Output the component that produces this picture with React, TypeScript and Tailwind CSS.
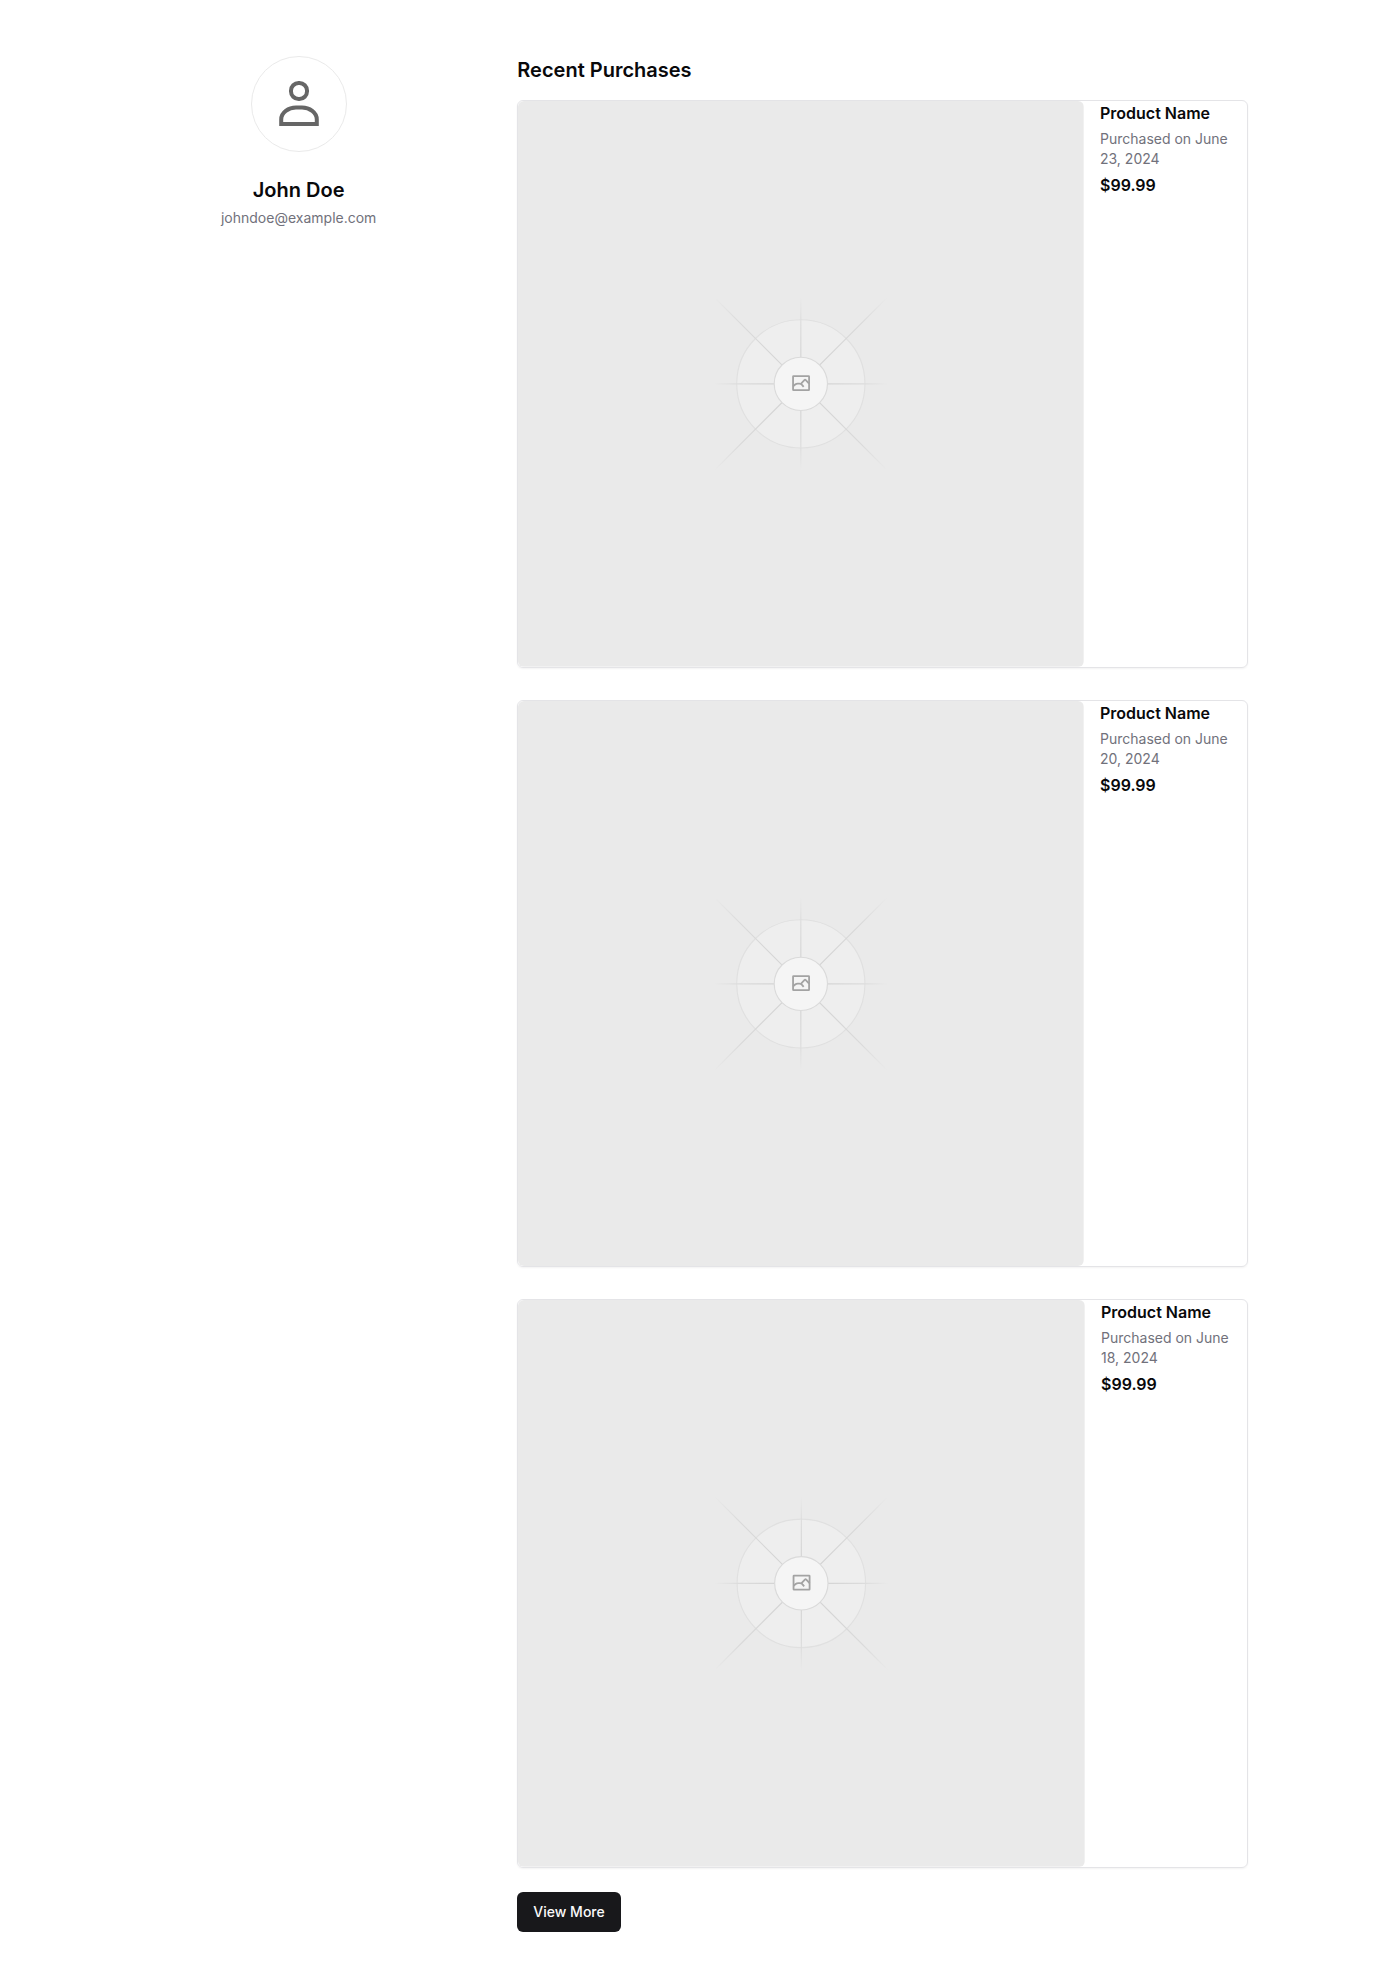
const purchases = [
  { id: 1, name: 'Product Name', date: 'June 23, 2024', price: '$99.99', details: 'w-[147px]' },
  { id: 2, name: 'Product Name', date: 'June 20, 2024', price: '$99.99', details: 'w-[147px]' },
  { id: 3, name: 'Product Name', date: 'June 18, 2024', price: '$99.99', details: 'w-[146px]' },
];

function UserIcon() {
  return (
    <svg viewBox="0 0 94 94" fill="none" stroke="#666666" strokeWidth="4" className="size-full" role="img" aria-label="Avatar">
      <rect x="39" y="26" width="16" height="16" rx="7.6" />
      <path d="M29.2 67v-4.5C29.2 55.5 36.5 50.6 44 50.6h6c7.5 0 14.8 4.9 14.8 11.9V67Z" />
    </svg>
  );
}

function ProductPlaceholder() {
  return (
    <svg viewBox="0 0 1200 1200" fill="none" className="block size-full" role="img" aria-label="Product image">
      <defs>
        <radialGradient id="ray" gradientUnits="userSpaceOnUse" cx="600" cy="600" r="185">
          <stop offset="0.3" stopColor="#d4d4d4" />
          <stop offset="0.72" stopColor="#dcdcdc" />
          <stop offset="1" stopColor="#eaeaea" />
        </radialGradient>
        <radialGradient id="diagonal-ray" gradientUnits="userSpaceOnUse" cx="600" cy="600" r="260">
          <stop offset="0.25" stopColor="#d4d4d4" />
          <stop offset="0.7" stopColor="#dadada" />
          <stop offset="1" stopColor="#eaeaea" />
        </radialGradient>
      </defs>
      <rect width="1200" height="1200" fill="#eaeaea" />
      <circle cx="600" cy="600" r="136" fill="#eeeeee" stroke="#e0e0e0" strokeWidth="2.4" />
      <g fill="url(#ray)">
        <path d="M598.8 415h2.4v370h-2.4z" />
        <path d="M415 598.8h370v2.4h-370z" />
      </g>
      <g stroke="url(#diagonal-ray)" strokeWidth="2.4">
        <path d="M416 416L784 784" />
        <path d="M784 416L416 784" />
      </g>
      <circle cx="600" cy="600" r="56.5" fill="#f5f5f5" stroke="#dadada" strokeWidth="2.4" />
      <g stroke="#a3a3a3" strokeWidth="3.8" strokeLinejoin="round">
        <rect x="583.5" y="583.5" width="34" height="30" rx="1" />
        <path d="M583.5 605.5l4.5-4c1.6-1.4 3.4-2 5.5-2h3.5c2.5 0 4.3.8 5.500 2.600l3.500 4.400" />
        <path d="M599.5 600.5l8-8.5c1-1 2-1 3 0l7 7.500" />
      </g>
    </svg>
  );
}

export default function App() {
  return (
    <main className="mx-auto grid max-w-6xl gap-12 px-4 py-14 font-['Inter',sans-serif] text-zinc-950 md:grid-cols-3">
      <section className="flex flex-col items-center gap-6">
        <div className="size-24 overflow-hidden rounded-full border border-[#eaeaea]">
          <UserIcon />
        </div>
        <div className="flex flex-col gap-1 text-center">
          <h1 className="text-xl font-semibold">John Doe</h1>
          <p className="text-sm text-zinc-500">johndoe@example.com</p>
        </div>
      </section>

      <section className="flex flex-col items-start md:col-span-2">
        <h2 className="mb-4 text-xl font-semibold">Recent Purchases</h2>
        <ul className="flex w-full flex-col gap-8">
          {purchases.map((item) => (
            <li key={item.id} className="flex items-start gap-4 rounded-md border border-zinc-200 shadow-xs">
              <div className="aspect-square min-w-0 flex-1 overflow-hidden rounded-md">
                <ProductPlaceholder />
              </div>
              <div className={`flex shrink-0 flex-col gap-1 pr-4 ${item.details}`}>
                <h3 className="font-semibold">{item.name}</h3>
                <p className="text-sm text-zinc-500">{`Purchased on ${item.date}`}</p>
                <p className="font-semibold">{item.price}</p>
              </div>
            </li>
          ))}
        </ul>
        <button type="button" className="mt-6 h-10 rounded-md bg-zinc-900 px-4 text-sm font-medium text-zinc-50">
          View More
        </button>
      </section>
    </main>
  );
}
